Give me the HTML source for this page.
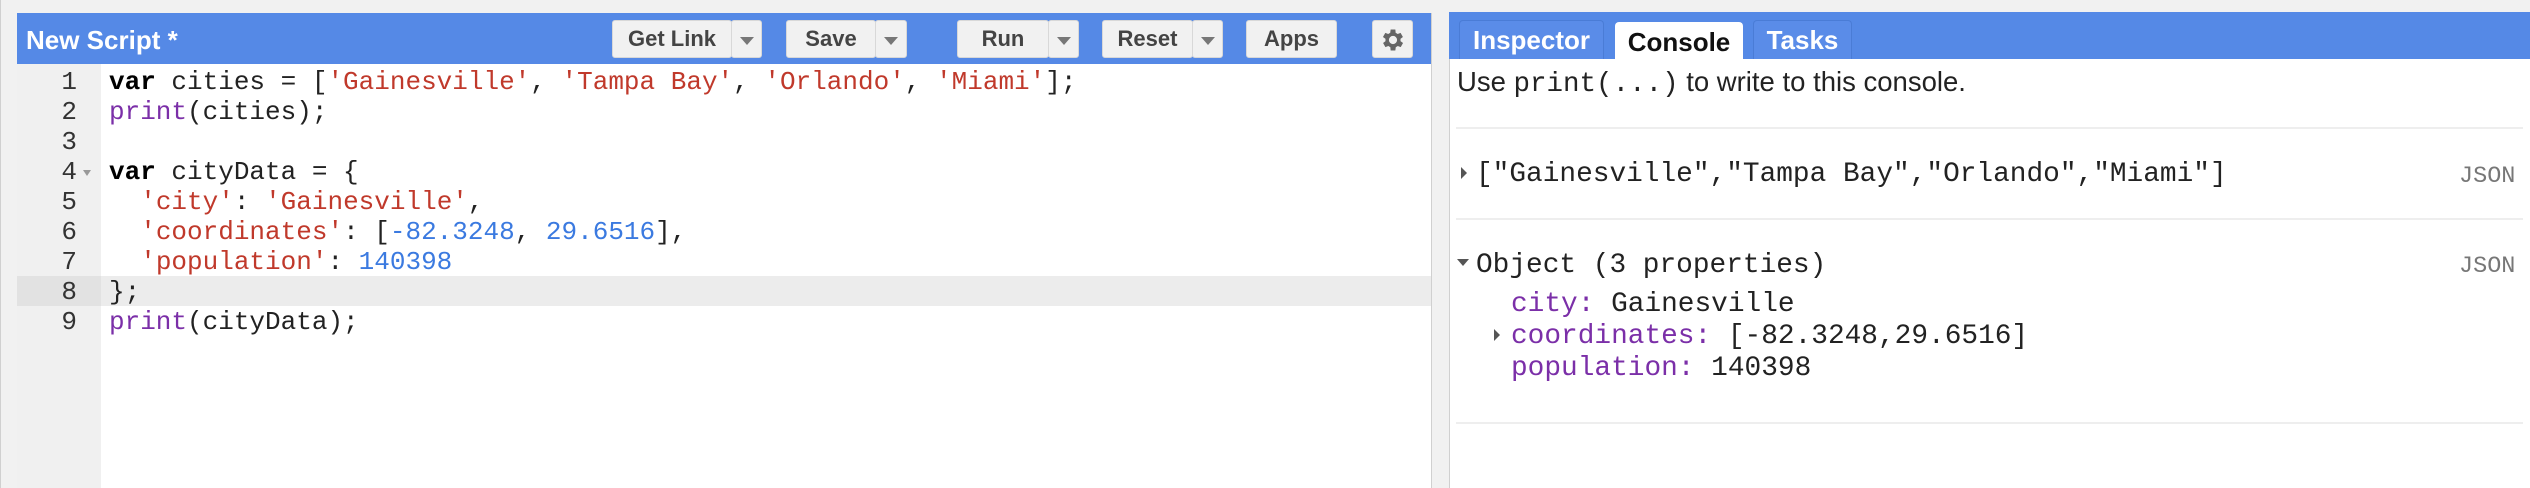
<!DOCTYPE html>
<html><head><meta charset="utf-8"><style>
*{box-sizing:border-box;margin:0;padding:0}
body{width:2530px;height:488px;background:#f1f1f1;position:relative;overflow:hidden;font-family:"Liberation Sans",Arial,sans-serif}
.abs{position:absolute}
.mono{font-family:"Liberation Mono","DejaVu Sans Mono",monospace}
#ed{left:17px;top:13px;width:1414px;height:475px;background:#fff;border-left:1px solid #d0d0d0}
#edbar{left:17px;top:13px;width:1414px;height:51px;background:#5589e6}
.btn{position:absolute;top:20px;height:38px;background:#f1f1f1;border:1px solid #d8d8d8;border-radius:3px;font-weight:bold;font-size:22px;color:#444;text-align:center;line-height:36px}
.dd{position:absolute;top:20px;height:38px;background:#f1f1f1;border:1px solid #d8d8d8;border-radius:3px}
.dd:after{content:"";position:absolute;left:50%;top:16px;margin-left:-7px;border-left:7px solid transparent;border-right:7px solid transparent;border-top:8px solid #777}
#gut{left:17px;top:64px;width:84px;height:424px;background:#f0f0f0}
.ln{position:absolute;left:17px;width:60px;text-align:right;font-size:26px;color:#333;line-height:30px}
.cl{position:absolute;left:109px;font-size:26px;line-height:30px;color:#222;white-space:pre}
.k{font-weight:bold;color:#000}.s{color:#c0392b}.n{color:#3b7ae0}.p{color:#7b2fa8}
#rp{left:1449px;top:12px;width:1081px;height:476px;background:#fff;border-left:1px solid #d0d0d0}
#rbar{left:1449px;top:12px;width:1081px;height:47px;background:#5589e6}
.tab{position:absolute;top:20px;height:39px;border:1px solid #4a7cd6;border-bottom:none;border-radius:4px 4px 0 0;font-size:26px;font-weight:bold;color:#fff;text-align:center;line-height:38px;background:#5a8ce8}
.sep{position:absolute;left:1456px;width:1067px;height:2px;background:#eeeeee}
.c{position:absolute;font-size:27.8px;line-height:32px;white-space:pre;color:#222}
.json{position:absolute;left:2459px;font-size:23.5px;color:#777}
.tri{position:absolute;width:0;height:0}
</style></head><body>
<div class="abs" style="left:0;top:0;width:1px;height:488px;background:#d0d0d0"></div>
<div id="ed" class="abs"></div>
<div id="edbar" class="abs"></div>
<div class="abs" style="left:26px;top:23px;font-size:26px;font-weight:bold;color:#fff;line-height:34px">New Script *</div>
<div class="btn" style="left:612px;width:120px">Get Link</div><div class="dd" style="left:731px;width:31px"></div>
<div class="btn" style="left:786px;width:90px">Save</div><div class="dd" style="left:875px;width:32px"></div>
<div class="btn" style="left:957px;width:92px">Run</div><div class="dd" style="left:1048px;width:31px"></div>
<div class="btn" style="left:1102px;width:91px">Reset</div><div class="dd" style="left:1192px;width:31px"></div>
<div class="btn" style="left:1246px;width:91px">Apps</div>
<div class="btn" style="left:1372px;width:41px;padding-top:5px">
<svg width="28" height="28" viewBox="0 0 24 24"><path fill="#666" d="M19.4 13a7.5 7.5 0 0 0 0-2l2.1-1.6-2-3.5-2.5 1a7.4 7.4 0 0 0-1.7-1L15 3h-4l-.4 2.9a7.4 7.4 0 0 0-1.7 1l-2.5-1-2 3.5L6.6 11a7.5 7.5 0 0 0 0 2l-2.1 1.6 2 3.5 2.5-1c.5.4 1.1.8 1.7 1L11 21h4l.4-2.9c.6-.2 1.200-.6 1.7-1l2.5 1 2-3.5zM13 15.5a3.5 3.5 0 1 1 0-7 3.5 3.5 0 0 1 0 7z" transform="translate(-1 0)"/></svg></div>
<div id="gut" class="abs"></div>
<div class="abs" style="left:17px;top:276px;width:1414px;height:30px;background:#ececec"></div>
<div class="abs" style="left:17px;top:276px;width:84px;height:30px;background:#e2e2e2"></div>
<div class="abs" style="left:1431px;top:13px;width:1px;height:475px;background:#d0d0d0"></div>
<div class="ln mono" style="top:67px">1</div><div class="ln mono" style="top:97px">2</div><div class="ln mono" style="top:127px">3</div><div class="ln mono" style="top:157px">4</div><div class="ln mono" style="top:187px">5</div><div class="ln mono" style="top:217px">6</div><div class="ln mono" style="top:247px">7</div><div class="ln mono" style="top:277px">8</div><div class="ln mono" style="top:307px">9</div>
<div class="tri" style="left:83px;top:170px;border-left:4px solid transparent;border-right:4px solid transparent;border-top:6px solid #999"></div>
<div class="cl mono" style="top:67px"><span class="k">var</span> cities = [<span class="s">'Gainesville'</span>, <span class="s">'Tampa Bay'</span>, <span class="s">'Orlando'</span>, <span class="s">'Miami'</span>];</div>
<div class="cl mono" style="top:97px"><span class="p">print</span>(cities);</div>
<div class="cl mono" style="top:157px"><span class="k">var</span> cityData = {</div>
<div class="cl mono" style="top:187px">  <span class="s">'city'</span>: <span class="s">'Gainesville'</span>,</div>
<div class="cl mono" style="top:217px">  <span class="s">'coordinates'</span>: [<span class="n">-82.3248</span>, <span class="n">29.6516</span>],</div>
<div class="cl mono" style="top:247px">  <span class="s">'population'</span>: <span class="n">140398</span></div>
<div class="cl mono" style="top:277px">};</div>
<div class="cl mono" style="top:307px"><span class="p">print</span>(cityData);</div>

<div id="rp" class="abs"></div>
<div id="rbar" class="abs"></div>
<div class="tab" style="left:1459px;width:145px">Inspector</div>
<div class="tab" style="left:1615px;top:22px;height:38px;width:128px;background:#fff;color:#111;border-color:#fff">Console</div>
<div class="tab" style="left:1753px;width:99px">Tasks</div>
<div class="abs" style="left:1457px;top:65px;font-size:27.5px;line-height:34px;color:#222;white-space:pre">Use <span class="mono">print(...)</span> to write to this console.</div>
<div class="sep" style="top:127px"></div>
<div class="tri" style="left:1461px;top:167px;border-top:6px solid transparent;border-bottom:6px solid transparent;border-left:6px solid #555"></div>
<div class="c mono" style="left:1476px;top:159px">["Gainesville","Tampa Bay","Orlando","Miami"]</div>
<div class="json mono" style="top:163px">JSON</div>
<div class="sep" style="top:218px"></div>
<div class="tri" style="left:1457px;top:259px;border-left:6px solid transparent;border-right:6px solid transparent;border-top:7px solid #555"></div>
<div class="c mono" style="left:1476px;top:250px">Object (3 properties)</div>
<div class="json mono" style="top:253px">JSON</div>
<div class="c mono" style="left:1511px;top:289px"><span class="p">city:</span> Gainesville</div>
<div class="tri" style="left:1494px;top:329px;border-top:6px solid transparent;border-bottom:6px solid transparent;border-left:6px solid #555"></div>
<div class="c mono" style="left:1511px;top:321px"><span class="p">coordinates:</span> [-82.3248,29.6516]</div>
<div class="c mono" style="left:1511px;top:353px"><span class="p">population:</span> 140398</div>
<div class="sep" style="top:422px"></div>
</body></html>
